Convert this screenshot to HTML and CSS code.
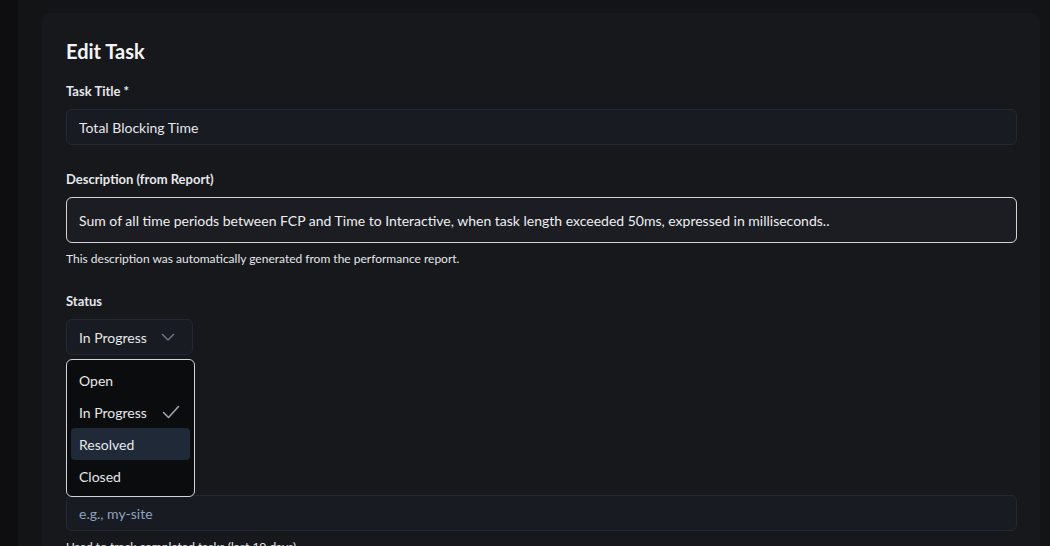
FILE: index.html
```html
<!DOCTYPE html>
<html lang="en">
<head>
<meta charset="utf-8">
<title>Edit Task</title>
<link rel="stylesheet" href="styles.css">
</head>
<body>
<div class="app">
  <aside class="rail"></aside>
  <main class="main">
    <section class="card">
      <h1 class="title">Edit Task</h1>

      <div class="field">
        <label class="label">Task Title *</label>
        <div class="input">Total Blocking Time</div>
      </div>

      <div class="field">
        <label class="label">Description (from Report)</label>
        <div class="textarea">Sum of all time periods between FCP and Time to Interactive, when task length exceeded 50ms, expressed in milliseconds..</div>
        <p class="hint">This description was automatically generated from the performance report.</p>
      </div>

      <div class="field status">
        <label class="label">Status</label>
        <div class="select">
          <span>In Progress</span>
          <svg class="chev" width="16" height="16" viewBox="0 0 16 16" fill="none"><path d="M2.5 5.5 8 11l5.5-5.5" stroke="currentColor" stroke-width="1.5" stroke-linecap="round" stroke-linejoin="round"/></svg>
        </div>
        <ul class="menu">
          <li class="opt">Open</li>
          <li class="opt">In Progress
            <svg class="check" width="18" height="16" viewBox="0 0 18 16" fill="none"><path d="M1.5 8.5 6.5 13.5 16.5 2.5" stroke="currentColor" stroke-width="1.6" stroke-linecap="round" stroke-linejoin="round"/></svg>
          </li>
          <li class="opt active">Resolved</li>
          <li class="opt">Closed</li>
        </ul>
      </div>

      <div class="field">
        <label class="label">Site Slug</label>
        <div class="input placeholder">e.g., my-site</div>
        <p class="hint">Used to track completed tasks (last 10 days)</p>
      </div>
    </section>
  </main>
</div>
</body>
</html>
```

FILE: styles.css
```css
* { box-sizing: border-box; }
html, body { margin: 0; padding: 0; }
body {
  background: #131416;
  color: #e5e7eb;
  font-family: "Segoe UI", Lato, "Noto Sans", sans-serif;
  font-size: 14px;
  height: 546px;
  overflow: hidden;
}
.app { display: flex; height: 546px; }
.rail { width: 18px; background: #0e0e10; flex: none; }
.main { flex: 1; padding: 13px 10px 0 24px; background: #131416; }
.card {
  background: #17181b;
  border-radius: 8px;
  padding: 24px 23px 24px 24px;
  min-height: 600px;
}
.title {
  margin: 0 0 16px;
  font-size: 20px;
  line-height: 28px;
  font-weight: 700;
  color: #f3f4f6;
}
.field { margin-bottom: 24px; position: relative; }
.field.status { margin-bottom: 112px; }
.label {
  display: block;
  font-size: 13px;
  line-height: 20px;
  font-weight: 700;
  color: #e5e7eb;
  margin-bottom: 8px;
}
.input {
  height: 36px;
  display: flex;
  align-items: center;
  padding: 0 12px;
  background: #181b22;
  border: 1px solid #222936;
  border-radius: 6px;
  color: #e5e7eb;
}
.input.placeholder { color: #8da2bf; }
.textarea {
  height: 46px;
  display: flex;
  align-items: center;
  padding: 0 12px;
  background: #1c1d22;
  border: 1px solid #d4d4d8;
  border-radius: 6px;
  color: #eceef1;
}
.hint {
  margin: 8px 0 0;
  font-size: 12px;
  line-height: 16px;
  color: #e5e7eb;
}
.select {
  width: 127px;
  height: 36px;
  display: flex;
  align-items: center;
  justify-content: space-between;
  padding: 0 16px 0 12px;
  background: #181b22;
  border: 1px solid #222936;
  border-radius: 6px;
  color: #e5e7eb;
}
.chev { color: #6b7280; flex: none; }
.menu {
  position: absolute;
  left: 0;
  top: 68px;
  z-index: 5;
  width: 129px;
  margin: 0;
  padding: 4px;
  list-style: none;
  background: #0b0c0e;
  border: 1px solid #d4d4d8;
  border-radius: 6px;
}
.opt {
  height: 32px;
  display: flex;
  align-items: center;
  justify-content: space-between;
  padding: 0 10px 0 8px;
  border-radius: 4px;
  color: #e5e7eb;
}
.opt.active { background: #1f2937; }
.check { color: #9ca3af; flex: none; }
```
